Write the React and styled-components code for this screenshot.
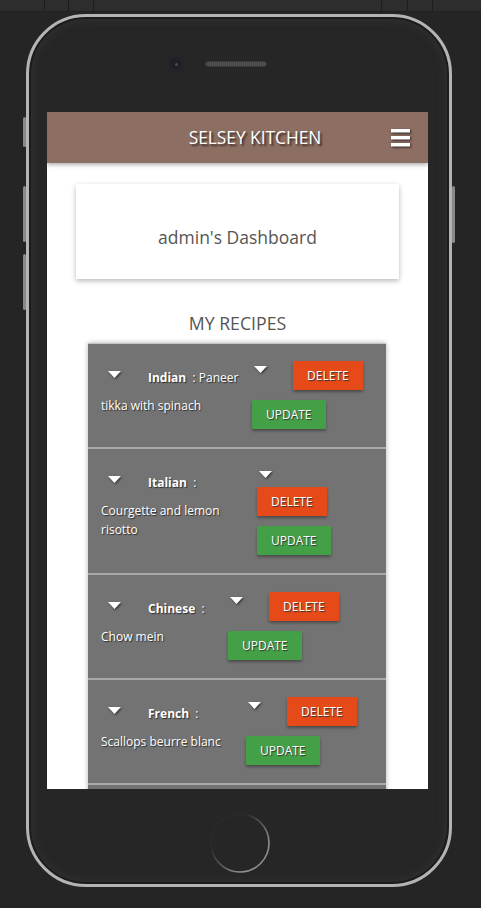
import React from "react";
import styled, { createGlobalStyle } from "styled-components";

const Global = createGlobalStyle`
  html, body { margin: 0; padding: 0; background: #252525; }
  body { font-family: "Open Sans", "Noto Sans", sans-serif; }
`;

const Page = styled.div`
  width: 481px;
  height: 908px;
  background: #252525;
  overflow: hidden;
`;

const Toolbar = styled.div`
  display: flex;
  height: 11px;
  background: #2d2d2d;
  border-bottom: 1px solid #212121;
`;

const Seg = styled.div`
  width: ${p => (p.$w ? `${p.$w}px` : "auto")};
  flex: ${p => (p.$w ? "none" : "1")};
  border-right: ${p => (p.$last ? "none" : "1px solid #1d1d1d")};
`;

const Phone = styled.div`
  position: relative;
  width: 420px;
  height: 867px;
  margin: 2px 0 0 26px;
  border: 3px solid #b4b4b4;
  border-radius: 60px;
  background: #262626;
  box-shadow: inset 0 0 0 2px #1c1c1c, inset 0 0 8px 4px #303030;
  display: flex;
  flex-direction: column;
`;

const SideKey = styled.div`
  position: absolute;
  width: 3px;
  top: ${p => p.$top}px;
  height: ${p => p.$h}px;
  ${p => (p.$right ? "right: -6px;" : "left: -6px;")}
  background: #8a8a8a;
  border-radius: 2px;
`;

const TopBezel = styled.div`
  height: 95px;
  display: flex;
  align-items: flex-start;
  padding: 42px 0 0 142px;
  box-sizing: border-box;
  gap: 24px;
`;

const Camera = styled.div`
  width: 10px;
  height: 10px;
  border-radius: 50%;
  background: #1e1e26;
  box-shadow: 0 0 3px 2px #222228;
  display: flex;
  align-items: center;
  justify-content: center;
  &::after {
    content: "";
    width: 3px;
    height: 3px;
    border-radius: 50%;
    background: #4a4a55;
  }
`;

const Speaker = styled.div`
  margin-top: 2px;
  width: 62px;
  height: 6px;
  border-radius: 3px;
  background: repeating-linear-gradient(90deg, #555 0 1px, #444 1px 2px);
  border: 1px solid #3a3a3a;
  box-sizing: border-box;
`;

const Screen = styled.div`
  width: 381px;
  height: 677px;
  margin-left: 18px;
  background: #fff;
  overflow: hidden;
  font-family: "Open Sans", "Noto Sans", sans-serif;
`;

const BottomBezel = styled.div`
  flex: 1;
  display: flex;
  justify-content: center;
  padding: 22px 0 0 1px;
`;

const Header = styled.header`
  position: relative;
  z-index: 1;
  height: 51px;
  background: #8d6e63;
  display: flex;
  align-items: center;
  padding-right: 17px;
  box-shadow: 0 2px 4px rgba(0, 0, 0, 0.3);
`;

const Brand = styled.div`
  flex: 1;
  padding-left: 72px;
  text-align: center;
  color: #fff;
  font-size: 17.3px;
  text-shadow: 2px 2px 2px #3b2a25;
`;

const Card = styled.div`
  margin: 21px 29px 0;
  height: 95px;
  box-sizing: border-box;
  padding-top: 10px;
  display: flex;
  align-items: center;
  justify-content: center;
  background: #fff;
  box-shadow: 0 2px 5px rgba(0, 0, 0, 0.28);
  color: #555;
  font-size: 17.5px;
`;

const Heading = styled.h2`
  margin: 32px 0 8px;
  text-align: center;
  color: #555;
  font-size: 17.7px;
  font-weight: 400;
  line-height: 24px;
`;

const List = styled.div`
  margin: 0 42px 0 41px;
  padding-bottom: 12px;
  background: #737373;
  border-top: 1px solid #c4c4c4;
  box-shadow: 0 0 5px rgba(0, 0, 0, 0.3);
`;

const Item = styled.div`
  display: flex;
  padding: 17px 0 18px 13px;
  border-bottom: 2px solid #a9a9a9;
`;

const Info = styled.div`
  box-sizing: border-box;
  width: ${p => p.$w}px;
  padding-right: ${p => p.$pad || 0}px;
  flex: none;
  color: #fff;
  font-size: 12px;
  line-height: 19px;
  text-shadow: 1px 1px 1px #2e2e2e;
`;

const Cat = styled.b`
  font-weight: 700;
`;

const Actions = styled.div`
  width: ${p => p.$w}px;
  display: flex;
  flex-wrap: wrap;
  align-items: flex-start;
  align-content: flex-start;
  row-gap: 10px;
`;

const Caret = styled.svg`
  display: inline-block;
  vertical-align: middle;
  width: 13px;
  height: 7px;
  overflow: visible;
  filter: drop-shadow(1px 1px 1px rgba(0, 0, 0, 0.6));
`;

const LeadCaret = styled(Caret)`
  margin: 10px 27px 18px 7px;
`;

const ActCaret = styled(Caret)`
  margin: 5px 26px -1px 2px;
`;

const Btn = styled.button`
  height: 29px;
  padding: 0 14px;
  border: 0;
  border-radius: 1px;
  background: ${p => p.$bg};
  color: #fff;
  font-family: inherit;
  font-size: 12px;
  text-transform: uppercase;
  text-shadow: 1px 1px 1px #333;
  box-shadow: 0 2px 3px rgba(0, 0, 0, 0.35);
`;

const Down = ({ as: C = Caret }) => (
  <C viewBox="0 0 13 7">
    <polygon points="0,0 13,0 6.5,7" fill="#fff" />
  </C>
);

const recipes = [
  { cat: "Indian", name: "Paneer tikka with spinach", info: 151, act: 118 },
  { cat: "Italian", name: "Courgette and lemon risotto", info: 156, pad: 8, act: 80 },
  { cat: "Chinese", name: "Chow mein", info: 127, act: 118 },
  { cat: "French", name: "Scallops beurre blanc", info: 145, act: 118 },
];

const App = () => {
  return (
    <Page>
      <Global />
      <Toolbar>
        <Seg $w={44} />
        <Seg $w={23} />
        <Seg $w={24} />
        <Seg />
        <Seg $w={25} />
        <Seg $w={24} />
        <Seg $w={48} $last />
      </Toolbar>
      <Phone>
        <SideKey $top={100} $h={30} />
        <SideKey $top={169} $h={56} />
        <SideKey $top={237} $h={56} />
        <SideKey $top={169} $h={57} $right />
        <TopBezel>
          <Camera />
          <Speaker />
        </TopBezel>
        <Screen>
          <Header>
            <Brand>SELSEY KITCHEN</Brand>
            <svg width="20" height="19" viewBox="0 0 20 19" style={{ filter: "drop-shadow(1px 1px 1px #2a1f1b)" }}>
              <rect x="0" y="1" width="19" height="3.5" fill="#fff" />
              <rect x="0" y="8" width="19" height="3.5" fill="#fff" />
              <rect x="0" y="15" width="19" height="3.5" fill="#fff" />
            </svg>
          </Header>
          <Card>admin's Dashboard</Card>
          <Heading>MY RECIPES</Heading>
          <List>
            {recipes.map(r => (
              <Item key={r.cat}>
                <Info $w={r.info} $pad={r.pad}>
                  <Down as={LeadCaret} />
                  <Cat>{r.cat}</Cat>&nbsp; : {r.name}
                </Info>
                <Actions $w={r.act}>
                  <Down as={ActCaret} />
                  <Btn $bg="#e64a19">Delete</Btn>
                  <Btn $bg="#43a047">Update</Btn>
                </Actions>
              </Item>
            ))}
          </List>
        </Screen>
        <BottomBezel>
          <svg width="64" height="64" viewBox="0 0 64 64">
            <defs>
              <linearGradient id="ring" x1="0" y1="0" x2="1" y2="1">
                <stop offset="0.3" stopColor="#2a2a2a" />
                <stop offset="0.75" stopColor="#8f8f8f" />
              </linearGradient>
            </defs>
            <circle cx="32" cy="32" r="29" fill="none" stroke="url(#ring)" strokeWidth="1.6" />
          </svg>
        </BottomBezel>
      </Phone>
    </Page>
  );
};

export default App;
